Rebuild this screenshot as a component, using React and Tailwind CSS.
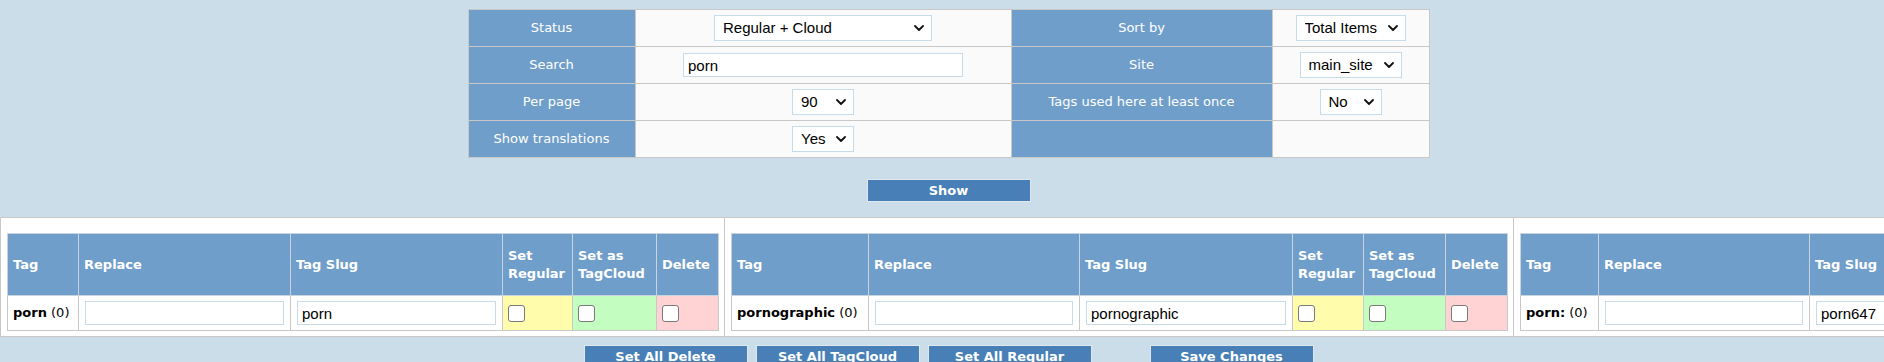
import React from "react";

// Tag manager screen: filter table, Show button, tag panels and bulk action buttons.

const Chevron = () => (
  <svg
    width="10"
    height="6"
    viewBox="0 0 10 6"
    className="pointer-events-none absolute right-[8px] top-1/2 -translate-y-1/2"
  >
    <path
      d="M1 1l4 4 4-4"
      fill="none"
      stroke="#111"
      strokeWidth="1.8"
      strokeLinecap="round"
      strokeLinejoin="round"
    />
  </svg>
);

const Select = ({ value, options, className }) => (
  <span className={"relative inline-block align-middle " + className}>
    <select
      defaultValue={value}
      className="h-[26px] w-full appearance-none border border-[#c7dbe9] bg-white pl-[8px] pr-[22px] font-['Liberation_Sans',Arial,sans-serif] text-[15px] text-black outline-none"
    >
      {options.map((o) => (
        <option key={o}>{o}</option>
      ))}
    </select>
    <Chevron />
  </span>
);

const filterRows = [
  {
    left: "Status",
    leftCtl: <Select value="Regular + Cloud" options={["Regular + Cloud", "Regular", "Cloud"]} className="w-[218px]" />,
    right: "Sort by",
    rightCtl: <Select value="Total Items" options={["Total Items", "Name"]} className="w-[110px]" />,
  },
  {
    left: "Search",
    leftCtl: (
      <input
        defaultValue="porn"
        className="h-[24px] w-[280px] border border-[#c7dbe9] bg-white px-[4px] align-middle font-['Liberation_Sans',Arial,sans-serif] text-[15px] text-black outline-none"
      />
    ),
    right: "Site",
    rightCtl: <Select value="main_site" options={["main_site"]} className="w-[102px]" />,
  },
  {
    left: "Per page",
    leftCtl: <Select value="90" options={["30", "60", "90"]} className="w-[62px]" />,
    right: "Tags used here at least once",
    rightCtl: <Select value="No" options={["No", "Yes"]} className="w-[62px]" />,
  },
  {
    left: "Show translations",
    leftCtl: <Select value="Yes" options={["Yes", "No"]} className="w-[62px]" />,
    right: "",
    rightCtl: null,
  },
];

const panels = [
  {
    tag: "porn",
    slug: "porn",
    table: "w-[711px]",
    cols: ["w-[71px]", "w-[212px]", "w-[212px]", "w-[70px]", "w-[84px]", "w-[62px]"],
  },
  {
    tag: "pornographic",
    slug: "pornographic",
    table: "w-[776px]",
    cols: ["w-[137px]", "w-[211px]", "w-[213px]", "w-[71px]", "w-[82px]", "w-[62px]"],
  },
  {
    tag: "porn:",
    slug: "porn647",
    table: "w-[717px]",
    cols: ["w-[78px]", "w-[211px]", "w-[213px]", "w-[71px]", "w-[82px]", "w-[62px]"],
  },
];

const headers = ["Tag", "Replace", "Tag Slug", "Set Regular", "Set as TagCloud", "Delete"];

const Check = () => (
  <input
    type="checkbox"
    className="block h-[17px] w-[17px] appearance-none rounded-[3px] border-[1.5px] border-[#7a7a7a] bg-white"
  />
);

const TagPanel = ({ panel }) => (
  <div className="shrink-0 border-y border-l border-[#c8c8c8] bg-white pb-[5px] pl-[6px] pr-[5px] pt-[15px]">
    <table className={"table-fixed border-collapse " + panel.table}>
      <thead>
        <tr>
          {headers.map((h, i) => (
            <th
              key={h}
              className={
                "h-[62px] border border-[#c9d3dd] bg-[#6f9eca] px-[5px] text-left align-middle font-['DejaVu_Sans',Verdana,sans-serif] text-[13px] font-bold leading-[18px] text-white " +
                panel.cols[i]
              }
            >
              {h === "Set Regular" ? (
                <>
                  Set
                  <br />
                  Regular
                </>
              ) : h === "Set as TagCloud" ? (
                <>
                  Set as
                  <br />
                  TagCloud
                </>
              ) : (
                h
              )}
            </th>
          ))}
        </tr>
      </thead>
      <tbody>
        <tr className="font-['DejaVu_Sans',Verdana,sans-serif] text-[13px] text-black">
          <td className="h-[35px] whitespace-nowrap border border-[#c8c8c8] px-[5px]">
            <b>{panel.tag}</b> (0)
          </td>
          <td className="border border-[#c8c8c8] px-[6px]">
            <input className="block h-[24px] w-full border border-[#c7dbe9] bg-white px-[4px] font-['Liberation_Sans',Arial,sans-serif] text-[15px] outline-none" />
          </td>
          <td className="border border-[#c8c8c8] px-[6px]">
            <input
              defaultValue={panel.slug}
              className="block h-[24px] w-full border border-[#c7dbe9] bg-white px-[4px] font-['Liberation_Sans',Arial,sans-serif] text-[15px] outline-none"
            />
          </td>
          <td className="border border-[#c8c8c8] bg-[#fffcab] px-[5px]">
            <Check />
          </td>
          <td className="border border-[#c8c8c8] bg-[#c3fdc0] px-[5px]">
            <Check />
          </td>
          <td className="border border-[#c8c8c8] bg-[#ffd3d3] px-[5px]">
            <Check />
          </td>
        </tr>
      </tbody>
    </table>
  </div>
);

const BlueButton = ({ children, className = "" }) => (
  <button
    className={
      "h-[23px] w-[164px] border border-[#dfe8ef] bg-[#477fb6] font-['DejaVu_Sans',Verdana,sans-serif] text-[13px] font-bold text-white " +
      className
    }
  >
    {children}
  </button>
);

export default function App() {
  return (
    <div className="h-[362px] w-full overflow-hidden bg-[#cbdde9] pt-[9px]">
      <div className="flex justify-center pl-[13px]">
        <table className="w-[961px] table-fixed border-collapse font-['DejaVu_Sans',Verdana,sans-serif] text-[13px]">
          <colgroup>
            <col className="w-[167px]" />
            <col className="w-[376px]" />
            <col className="w-[261px]" />
            <col className="w-[157px]" />
          </colgroup>
          <tbody>
            {filterRows.map((r) => (
              <tr key={r.left}>
                <td className="h-[37px] border border-[#c8c8c8] bg-[#6f9eca] text-center text-white">{r.left}</td>
                <td className="border border-[#c8c8c8] bg-[#fafafa] text-center">{r.leftCtl}</td>
                <td className="border border-[#c8c8c8] bg-[#6f9eca] text-center text-white">{r.right}</td>
                <td className="border border-[#c8c8c8] bg-[#fafafa] text-center">{r.rightCtl}</td>
              </tr>
            ))}
          </tbody>
        </table>
      </div>

      <div className="mt-[21px] flex justify-center pl-[13px]">
        <BlueButton>Show</BlueButton>
      </div>

      <div className="mt-[15px] flex">
        {panels.map((p) => (
          <TagPanel key={p.tag} panel={p} />
        ))}
      </div>

      <div className="mt-[8px] flex justify-center gap-[8px] pl-[13px]">
        <BlueButton>Set All Delete</BlueButton>
        <BlueButton>Set All TagCloud</BlueButton>
        <BlueButton>Set All Regular</BlueButton>
        <BlueButton className="ml-[50px]">Save Changes</BlueButton>
      </div>
    </div>
  );
}
